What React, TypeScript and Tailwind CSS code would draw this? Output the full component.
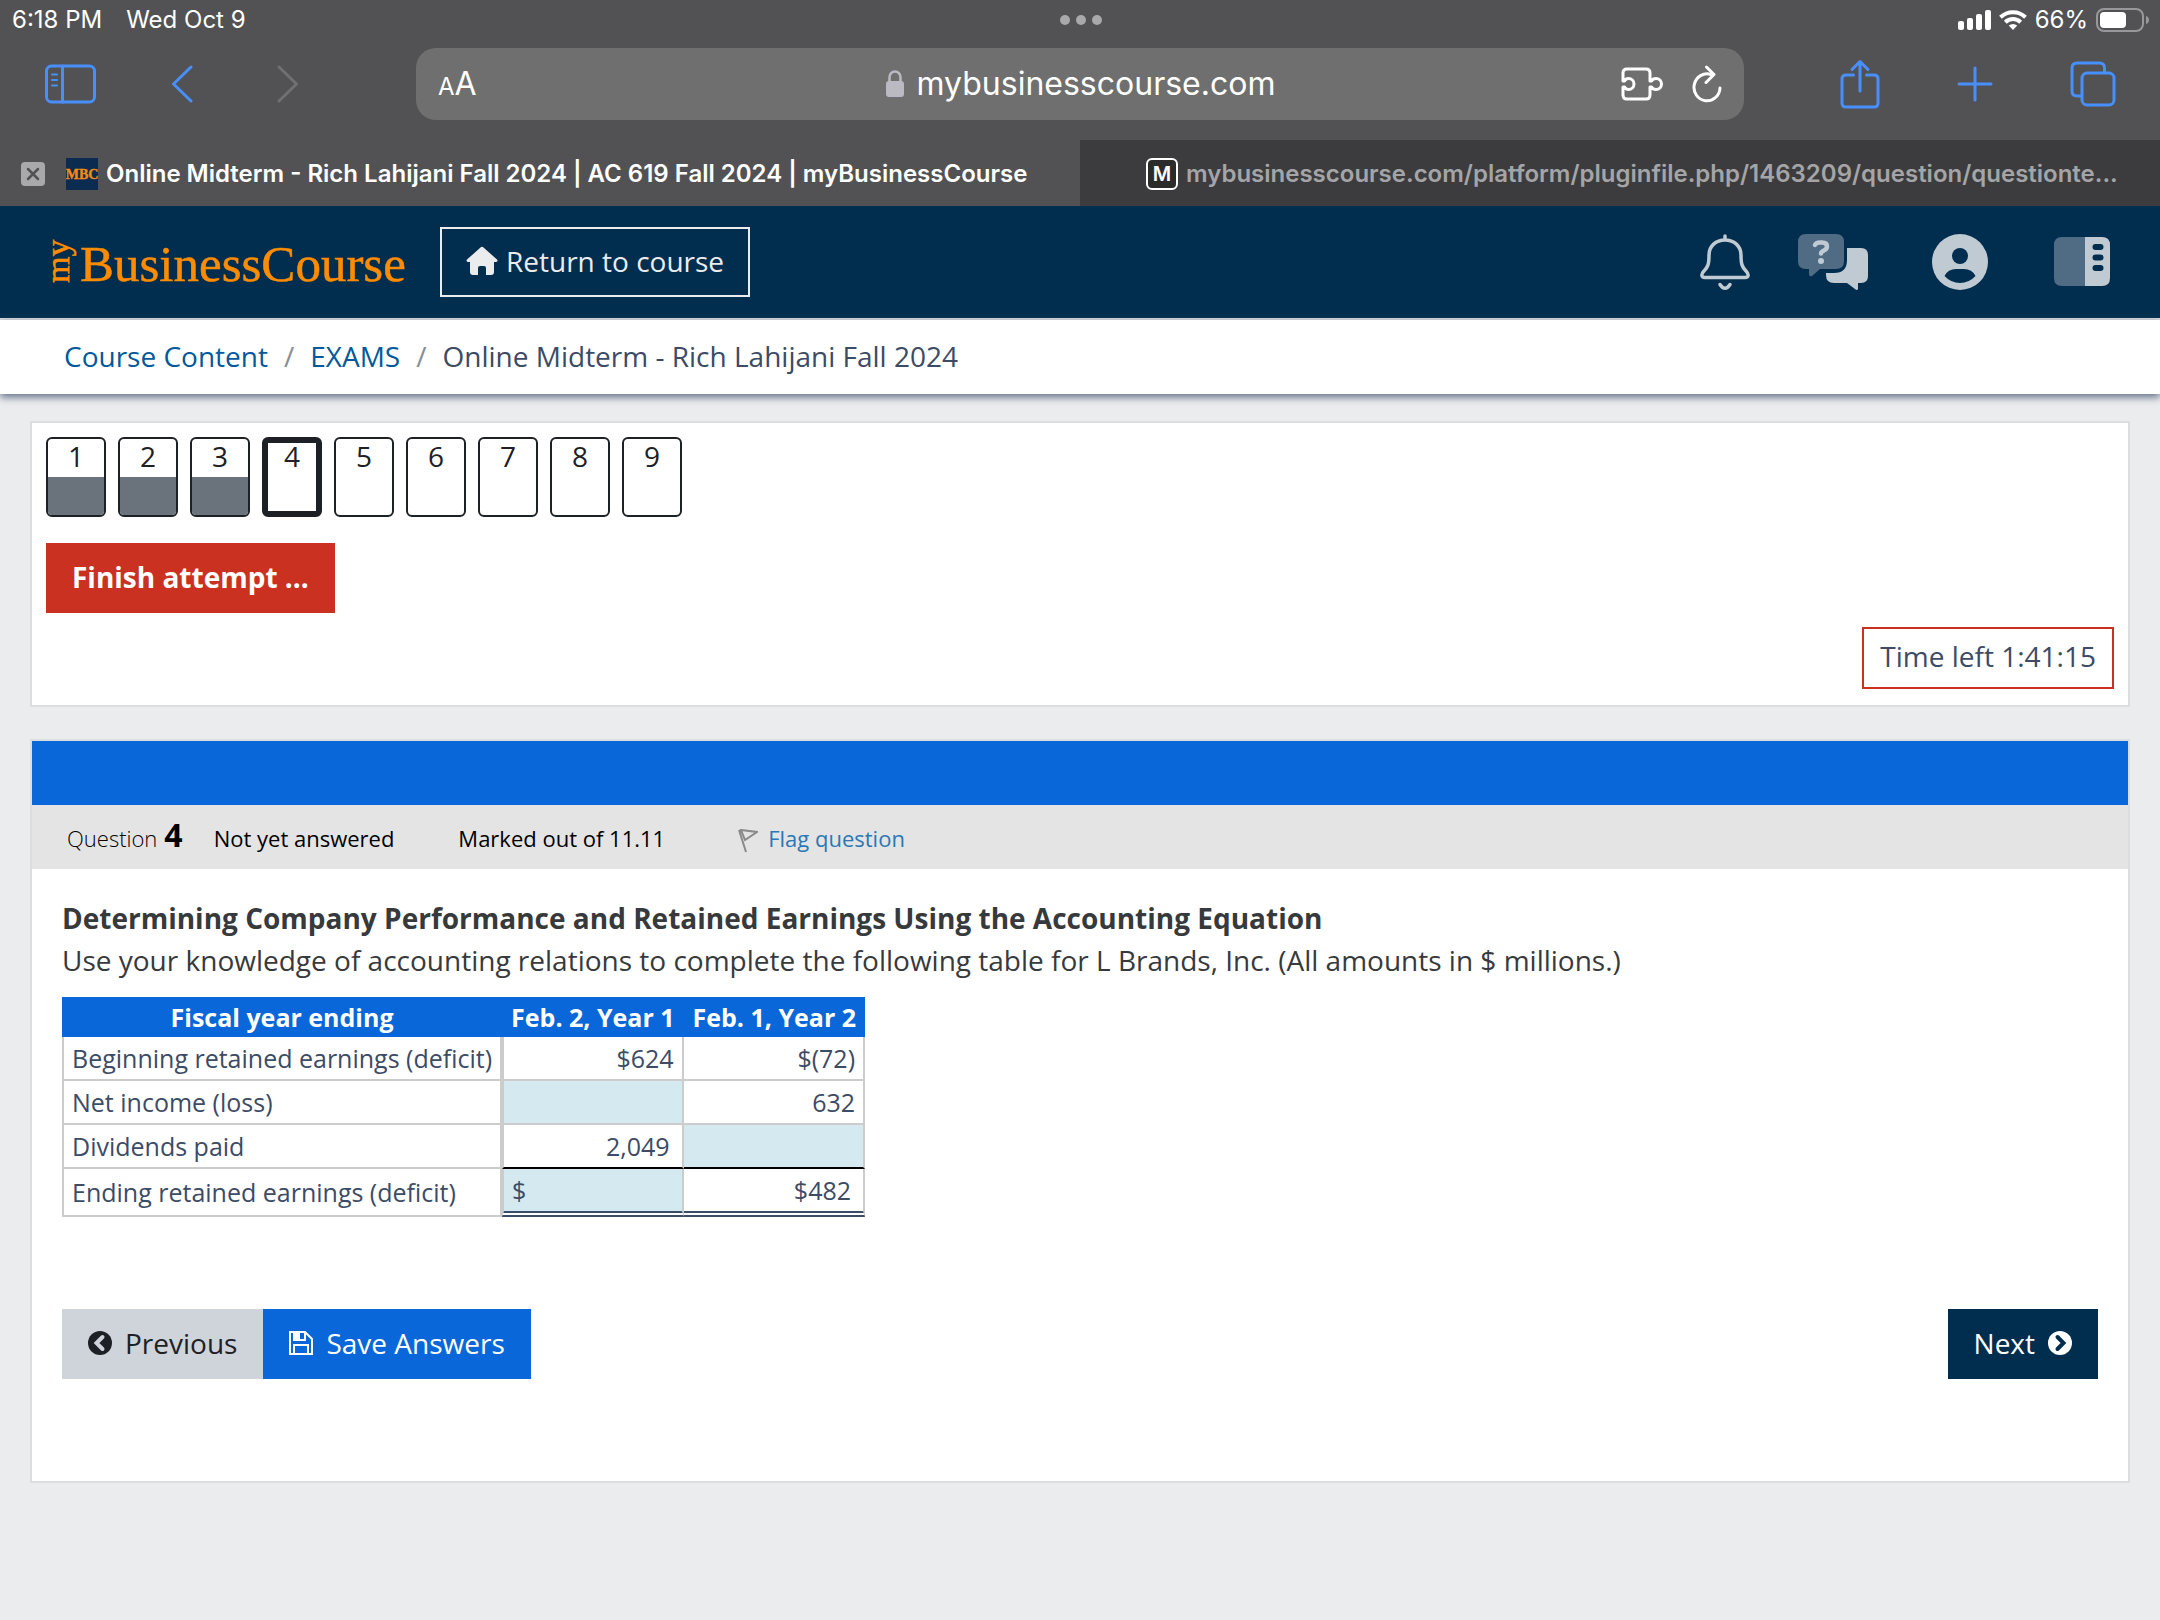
import type { ReactNode } from "react";

type QuestionLink = {
  number: number;
  state: "answered" | "current" | "open";
};

const questions: QuestionLink[] = [
  { number: 1, state: "answered" },
  { number: 2, state: "answered" },
  { number: 3, state: "answered" },
  { number: 4, state: "current" },
  { number: 5, state: "open" },
  { number: 6, state: "open" },
  { number: 7, state: "open" },
  { number: 8, state: "open" },
  { number: 9, state: "open" },
];

function StatusBar() {
  return (
    <div className="grid grid-cols-3 items-center h-10 pl-3 pr-2.5 text-[24px] text-white">
      <div className="flex items-center gap-6">
        <span>6:18 PM</span>
        <span>Wed Oct 9</span>
      </div>
      <button aria-label="Multitasking" className="flex justify-center gap-1.5">
        <span className="size-2.5 rounded-full bg-[#a9a9ab]" />
        <span className="size-2.5 rounded-full bg-[#a9a9ab]" />
        <span className="size-2.5 rounded-full bg-[#a9a9ab]" />
      </button>
      <div className="flex items-center justify-end gap-2">
        <svg width="33" height="20" viewBox="0 0 33 20" fill="currentColor">
          <rect x="0" y="11" width="6" height="9" rx="2" />
          <rect x="9" y="8" width="6" height="12" rx="2" />
          <rect x="18" y="4" width="6" height="16" rx="2" />
          <rect x="27" y="0" width="6" height="20" rx="2" />
        </svg>
        <svg width="28" height="20" viewBox="0 0 28 20" fill="none" stroke="currentColor" strokeWidth="4">
          <path d="M1.5 7.2a18 18 0 0 1 25 0" />
          <path d="M6.3 12.2a11 11 0 0 1 15.4 0" />
          <path d="M14 20l-4.2-4.4a6 6 0 0 1 8.4 0z" fill="currentColor" stroke="none" />
        </svg>
        <span>66%</span>
        <svg width="54" height="24" viewBox="0 0 54 24" fill="none">
          <rect x="1" y="1" width="46" height="22" rx="7" stroke="#98989a" strokeWidth="2" />
          <rect x="4" y="4" width="26" height="16" rx="4" fill="#fff" />
          <path d="M50 8c4 1 4 7 0 8z" fill="#98989a" />
        </svg>
      </div>
    </div>
  );
}

function Toolbar() {
  return (
    <div className="flex items-center h-[100px] pt-2 pb-5 text-[#478ffb]">
      <div className="flex items-center w-[416px] pl-[45px]">
        <button aria-label="Sidebar">
          <svg width="51" height="40" viewBox="0 0 51 40" fill="none" stroke="currentColor" strokeWidth="3" strokeLinecap="round">
            <rect x="1.5" y="2" width="48" height="36" rx="5" />
            <path d="M17.5 2v36" />
            <path d="M7 10.500h5M7 16h5M7 21.500h5" strokeWidth="2" />
          </svg>
        </button>
        <button aria-label="Back" className="ml-[75px]">
          <svg width="22" height="38" viewBox="0 0 22 38" fill="none" stroke="currentColor" strokeWidth="3" strokeLinecap="round" strokeLinejoin="round">
            <path d="M20 2L2.500 19L20 36" />
          </svg>
        </button>
        <button aria-label="Forward" className="ml-[84px] text-[#707072]">
          <svg width="22" height="38" viewBox="0 0 22 38" fill="none" stroke="currentColor" strokeWidth="3" strokeLinecap="round" strokeLinejoin="round">
            <path d="M2 2L19.500 19L2 36" />
          </svg>
        </button>
      </div>
      <div className="grid grid-cols-[1fr_auto_1fr] items-center flex-1 h-[72px] px-[22px] rounded-[20px] bg-[#6f6f6f] text-white">
        <button aria-label="Page settings" className="flex items-baseline">
          <span className="text-[24px]">A</span>
          <span className="text-[32px]">A</span>
        </button>
        <button className="flex items-center gap-3 text-[32px] leading-10">
          <svg width="20" height="28" viewBox="0 0 20 28" fill="none">
            <rect x="1" y="11" width="18" height="16" rx="3" fill="#bbbac2" />
            <path d="M4.500 12V7a5.500 5.500 0 0 1 11 0v5" stroke="#bbbac2" strokeWidth="2.500" />
          </svg>
          mybusinesscourse.com
        </button>
        <div className="flex items-center justify-end gap-[29px]">
          <button aria-label="Extensions">
            <svg width="42" height="34" viewBox="0 0 42 34" fill="none" stroke="currentColor" strokeWidth="3" strokeLinejoin="round">
              <path d="M6 2h19q4 0 4 4v8h1.500c1-2 3-2.500 4.500-2.500a5.500 5.500 0 0 1 0 11c-1.500 0-3.500-.5-4.500-2.500H29v8q0 4-4 4H6q-4 0-4-4v-8h1.500c1 2 2.500 2.500 4 2.500a5.500 5.500 0 0 0 0-11c-1.500 0-3 .5-4 2.500H2V6q0-4 4-4z" />
            </svg>
          </button>
          <button aria-label="Reload">
            <svg width="30" height="38" viewBox="0 0 30 38" fill="none" stroke="currentColor" strokeWidth="3" strokeLinecap="round" strokeLinejoin="round">
              <path d="M28 23a13 13.500 0 1 1-9-13.500" />
              <path d="M14.500 2l7.500 7.500l-8 8" />
            </svg>
          </button>
        </div>
      </div>
      <div className="flex items-center justify-between w-[416px] pl-24 pr-11">
        <button aria-label="Share">
          <svg width="40" height="50" viewBox="0 0 40 50" fill="none" stroke="currentColor" strokeWidth="3" strokeLinecap="round" strokeLinejoin="round">
            <path d="M13.500 16H6q-4 0-4 4v24q0 4 4 4h28q4 0 4-4V20q0-4-4-4h-7.500" />
            <path d="M20 32V3M12 10.500L20 2.500l8 8" />
          </svg>
        </button>
        <button aria-label="New tab">
          <svg width="36" height="36" viewBox="0 0 36 36" stroke="currentColor" strokeWidth="3" strokeLinecap="round">
            <path d="M18 2v32M2 18h32" />
          </svg>
        </button>
        <button aria-label="All tabs">
          <svg width="46" height="46" viewBox="0 0 46 46" fill="none" stroke="currentColor" strokeWidth="3">
            <rect x="12" y="12" width="32" height="32" rx="5" />
            <path d="M34.500 12V7q0-5-5-5H7Q2 2 2 7v23q0 5 5 5h5" />
          </svg>
        </button>
      </div>
    </div>
  );
}

function BrowserTabs() {
  return (
    <div className="grid grid-cols-2 h-[66px] text-[24px] font-semibold">
      <div className="flex items-center min-w-0 pl-[21px] pt-0.5 text-white">
        <button aria-label="Close tab" className="flex items-center justify-center size-6 rounded bg-[#a9a9ab]">
          <svg width="14" height="14" viewBox="0 0 14 14" stroke="#525254" strokeWidth="2.500" strokeLinecap="round">
            <path d="M2 2l10 10M12 2L2 12" />
          </svg>
        </button>
        <svg className="ml-[21px] mr-2 shrink-0" width="32" height="32" viewBox="0 0 32 32">
          <rect width="32" height="32" fill="#0b2b50" />
          <text x="16" y="21" textAnchor="middle" fontFamily="Liberation Serif, serif" fontSize="14" fill="#f28a14" stroke="#f28a14" strokeWidth="0.4">
            MBC
          </text>
        </svg>
        <span className="truncate">Online Midterm - Rich Lahijani Fall 2024 | AC 619 Fall 2024 | myBusinessCourse</span>
      </div>
      <div className="flex items-center min-w-0 pl-[66px] pt-0.5 bg-[#3c3c3e] text-[#a5a5a7]">
        <span className="flex items-center justify-center size-8 mr-2 shrink-0 rounded-md border-2 border-white bg-[#2b2b2b] text-white text-[20px]">
          M
        </span>
        <span className="truncate">mybusinesscourse.com/platform/pluginfile.php/1463209/question/questionte...</span>
      </div>
    </div>
  );
}

function Logo() {
  return (
    <svg width="376" height="80" viewBox="-10 -12 376 80" role="img" aria-label="myBusinessCourse" fontFamily="Liberation Serif, serif" fill="#ff8c00">
      <text transform="translate(18 49) rotate(-90)" fontSize="34" stroke="#ff8c00" strokeWidth="0.5">
        my
      </text>
      <text x="29" y="47" fontSize="51" stroke="#ff8c00" strokeWidth="0.5">
        BusinessCourse
      </text>
    </svg>
  );
}

function SiteHeader() {
  return (
    <header className="flex items-center justify-between h-[114px] pl-[41px] pr-[50px] bg-[#012e4e] border-b-2 border-[#dcdddf] text-[#c0cad3]">
      <div className="flex items-center gap-[23px]">
        <Logo />
        <a href="#" className="flex items-center gap-2 h-[70px] px-6 pb-[3px] border-2 border-[#ebecee] text-[28px] text-[#ebecee]">
          <svg width="32" height="30" viewBox="0 0 32 30" fill="currentColor">
            <path d="M14.500 1.500q1.500-1.500 3 0L31 13.500q1.500 2-1 2.500h-2v10q0 3-3 3h-5v-7q0-2-2-2h-4q-2 0-2 2v7H7q-3 0-3-3V16H2q-2.500-.5-1-2.500z" />
          </svg>
          Return to course
        </a>
      </div>
      <div className="flex items-center">
        <button aria-label="Notifications">
          <svg width="50" height="56" viewBox="0 0 50 56" fill="none" stroke="currentColor" strokeWidth="3.500" strokeLinecap="round" strokeLinejoin="round">
            <path d="M25 2v4M25 6C16 6 9 12 9 21c0 9-1 12-5 16-3 3-3 6.500 1 6.500h40c4 0 4-3.500 1-6.500-4-4-5-7-5-16C41 12 34 6 25 6z" />
            <path d="M20 50.500q5 7.500 10 0" />
          </svg>
        </button>
        <button aria-label="Help" className="ml-12">
          <svg width="70" height="56" viewBox="0 0 70 56">
            <path d="M7 0h31q8 0 8 8v19q0 8-8 8H22l-8 7q-3 1-3-2v-5H8q-8 0-8-8V8q0-8 8-8z" fill="#4f6c84" />
            <path d="M49 14h14q7 0 7 7v21q0 7-7 7h-3v6q-1 2-3 0l-8-6H36q-8 0-8-8v-2h8q13 0 13-13z" fill="currentColor" />
            <path d="M17 11q1-2.500 5-2.500h2q5 0 5 4 0 2.500-3 4t-3 3" fill="none" stroke="currentColor" strokeWidth="4.500" strokeLinecap="round" />
            <circle cx="23" cy="27" r="3" fill="currentColor" />
          </svg>
        </button>
        <button aria-label="Account" className="ml-16">
          <svg width="56" height="56" viewBox="0 0 56 56">
            <circle cx="28" cy="28" r="28" fill="currentColor" />
            <circle cx="28" cy="22" r="8" fill="#012e4e" />
            <path d="M12.500 42Q16 35 24 35h8q8 0 11.500 7Q37 49 28 49T12.500 42z" fill="#012e4e" />
          </svg>
        </button>
        <button aria-label="Open drawer" className="ml-[66px]">
          <svg width="56" height="50" viewBox="0 0 56 50">
            <path d="M31 0H8Q0 0 0 8v33q0 8 8 8h23z" fill="#4f6c84" />
            <path d="M31 0h17q8 0 8 8v33q0 8-8 8H31z" fill="currentColor" />
            <path d="M41.500 10h5M41.500 20.500h5M41.500 31h5" stroke="#012e4e" strokeWidth="6" strokeLinecap="round" />
          </svg>
        </button>
      </div>
    </header>
  );
}

function Breadcrumb() {
  return (
    <nav aria-label="Breadcrumb" className="flex items-center gap-4 h-[74px] px-16 pb-[3px] bg-white shadow-[0_3px_8px_#5d6b80] text-[28px] text-[#3c4b66]">
      <a href="#" className="text-[#02599c]">
        Course Content
      </a>
      <span className="text-[#868e96]">/</span>
      <a href="#" className="text-[#02599c]">
        EXAMS
      </a>
      <span className="text-[#868e96]">/</span>
      <span>Online Midterm - Rich Lahijani Fall 2024</span>
    </nav>
  );
}

function QuestionButton({ question }: { question: QuestionLink }) {
  if (question.state === "current") {
    return (
      <a href="#" aria-current="page" className="w-[60px] h-20 rounded-md border-[6px] border-[#1d2125] text-center leading-[26px]">
        {question.number}
      </a>
    );
  }
  return (
    <a href="#" className="flex flex-col w-[60px] h-20 overflow-hidden rounded-md border-2 border-[#1d2125] text-center leading-[34px]">
      <span className="h-[38px]">{question.number}</span>
      {question.state === "answered" && <span className="flex-1 bg-[#6a737b]" />}
    </a>
  );
}

function QuizNavigation() {
  return (
    <section className="px-3.5 pt-3.5 pb-4 border-2 border-[#dcdddf] bg-white text-[28px]">
      <div className="flex gap-3 text-[#1d2125]">
        {questions.map((question) => (
          <QuestionButton key={question.number} question={question} />
        ))}
      </div>
      <button className="mt-[26px] h-[70px] px-[26px] pb-[3px] bg-[#ca3120] font-bold text-white">Finish attempt ...</button>
      <div className="flex justify-end mt-3.5">
        <div className="h-[62px] px-4 border-2 border-[#ca3120] leading-[54px] text-[#3c4b66]">Time left 1:41:15</div>
      </div>
    </section>
  );
}

function LabelCell({ children }: { children: ReactNode }) {
  return (
    <th scope="row" className="px-2 border-x-2 border-b-2 border-[#ccc] text-left font-normal">
      {children}
    </th>
  );
}

function AnswerTable() {
  return (
    <table className="mt-4 border-separate border-spacing-0 text-[25px] leading-[42px] text-[#3c4b66] whitespace-nowrap">
      <thead className="bg-[#0967d9] leading-10 text-white">
        <tr>
          <th className="px-[9px] font-bold">Fiscal year ending</th>
          <th className="px-[9px] font-bold">Feb. 2, Year 1</th>
          <th className="px-[9px] font-bold">Feb. 1, Year 2</th>
        </tr>
      </thead>
      <tbody className="text-right">
        <tr>
          <LabelCell>Beginning retained earnings (deficit)</LabelCell>
          <td className="px-2 border-x-2 border-b-2 border-[#ccc]">$624</td>
          <td className="px-2 border-r-2 border-b-2 border-[#ccc]">$(72)</td>
        </tr>
        <tr>
          <LabelCell>Net income (loss)</LabelCell>
          <td className="p-0 border-x-2 border-b-2 border-[#ccc] bg-[#d4eaf0]">
            <input aria-label="Net income, Year 1" className="block w-40 h-[42px] px-2 text-right outline-none" />
          </td>
          <td className="px-2 border-r-2 border-b-2 border-[#ccc]">632</td>
        </tr>
        <tr>
          <LabelCell>Dividends paid</LabelCell>
          <td className="px-3 border-x-2 border-b-2 border-[#ccc] border-b-black">2,049</td>
          <td className="p-0 border-r-2 border-b-2 border-[#ccc] border-b-black bg-[#d4eaf0]">
            <input aria-label="Dividends paid, Year 2" className="block w-40 h-[42px] px-2 text-right outline-none" />
          </td>
        </tr>
        <tr>
          <LabelCell>Ending retained earnings (deficit)</LabelCell>
          <td className="px-2 border-x-2 border-[#ccc] border-b-6 border-b-[#3c4b66] [border-bottom-style:double] bg-[#d4eaf0] bg-clip-padding">
            <div className="flex">
              $
              <input aria-label="Ending retained earnings, Year 1" className="w-32 h-[42px] text-right outline-none" />
            </div>
          </td>
          <td className="px-3 border-r-2 border-[#ccc] border-b-6 border-b-[#3c4b66] [border-bottom-style:double]">$482</td>
        </tr>
      </tbody>
    </table>
  );
}

function Question() {
  return (
    <section className="mt-8 border-2 border-[#dcdddf] bg-white">
      <div className="h-16 bg-[#0967d9]" />
      <div className="flex items-baseline h-16 pl-[35px] pt-2.5 bg-[#e4e4e4] text-[22px] text-black">
        <h3 className="flex items-baseline gap-[7px] font-light">
          Question
          <span className="text-[32px] leading-10 font-bold">4</span>
        </h3>
        <span className="ml-[31px]">Not yet answered</span>
        <span className="ml-16">Marked out of 11.11</span>
        <a href="#" className="ml-[73px] text-[#2a78b5]">
          <svg className="inline mr-2.5" width="20" height="24" viewBox="0 0 20 24" fill="none" stroke="#8a8a8a" strokeWidth="2">
            <path d="M1 1l7 22M3 1l16 2L7 11z" />
          </svg>
          Flag question
        </a>
      </div>
      <div className="px-[30px] pt-7 pb-[102px]">
        <div className="text-[28px] leading-[42px] text-[#373a3c]">
          <h4 className="font-bold">Determining Company Performance and Retained Earnings Using the Accounting Equation</h4>
          <p>Use your knowledge of accounting relations to complete the following table for L Brands, Inc. (All amounts in $ millions.)</p>
        </div>
        <AnswerTable />
        <div className="flex mt-[92px] text-[28px]">
          <button className="flex items-center gap-[13px] h-[70px] px-[26px] pb-0.5 bg-[#ced4da] text-[#1d2125]">
            <svg width="24" height="24" viewBox="0 0 24 24" fill="none">
              <circle cx="12" cy="12" r="12" fill="#1d2125" />
              <path d="M14.500 6L8.500 12l6 6" stroke="#ced4da" strokeWidth="4" strokeLinecap="round" />
            </svg>
            Previous
          </button>
          <button className="flex items-center gap-[13px] h-[70px] px-[26px] pb-0.5 bg-[#0967d9] text-white">
            <svg width="24" height="24" viewBox="0 0 24 24" fill="none" stroke="currentColor" strokeWidth="2">
              <path d="M1 1h15l7 7v15H1z" />
              <path d="M5 1v8h11V1M5 23v-9h14v9" />
              <path d="M5 1h5v8H5z" fill="currentColor" />
            </svg>
            Save Answers
          </button>
          <button className="flex items-center gap-[13px] h-[70px] ml-auto px-[26px] pb-0.5 bg-[#012e4e] text-white">
            Next
            <svg width="24" height="24" viewBox="0 0 24 24" fill="none">
              <circle cx="12" cy="12" r="12" fill="#fff" />
              <path d="M9.500 6L15.500 12l-6 6" stroke="#012e4e" strokeWidth="4" strokeLinecap="round" />
            </svg>
          </button>
        </div>
      </div>
    </section>
  );
}

export default function App() {
  return (
    <div className="min-h-screen bg-[#ebecee] font-['Open_Sans',sans-serif]">
      <div className="bg-[#525254] font-[Inter,sans-serif]">
        <StatusBar />
        <Toolbar />
        <BrowserTabs />
      </div>
      <SiteHeader />
      <Breadcrumb />
      <main className="px-[30px] pt-[27px] pb-8">
        <QuizNavigation />
        <Question />
      </main>
    </div>
  );
}
